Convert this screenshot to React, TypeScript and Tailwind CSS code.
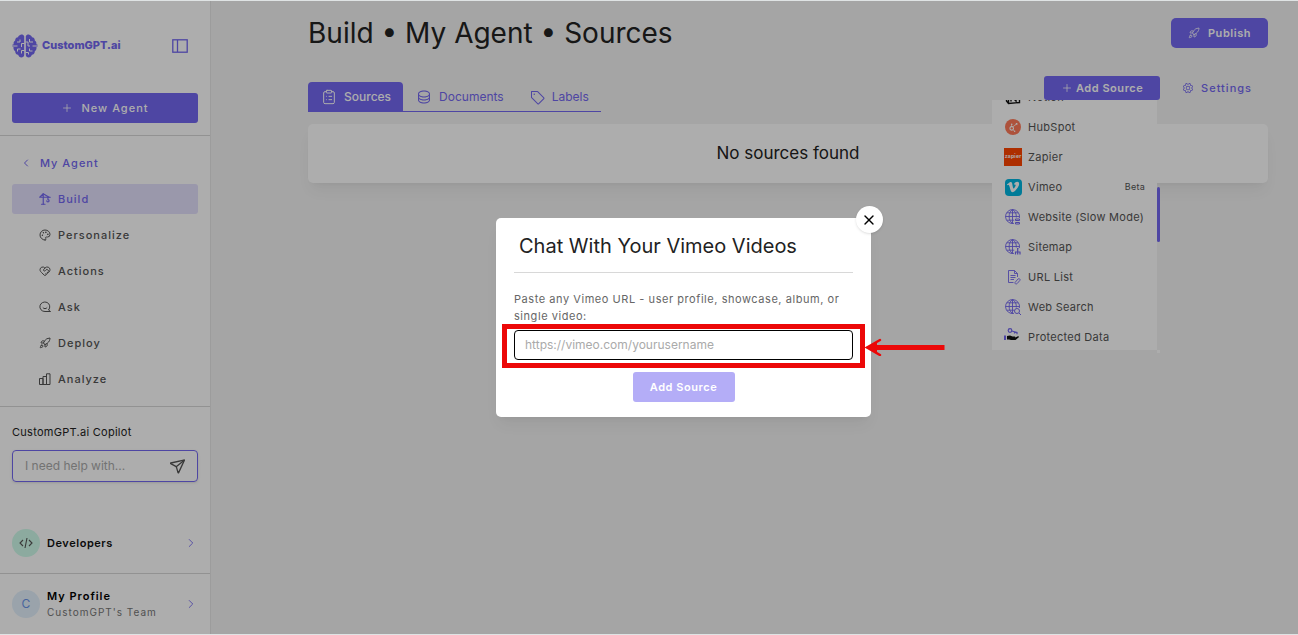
import type { ReactNode } from "react";
import {
  ChevronLeft,
  ChevronRight,
  ClipboardList,
  HeartHandshake,
  Palette,
  Plus,
  Rocket,
  Send,
  X,
} from "lucide-react";
import { FaHubspot, FaVimeoV } from "react-icons/fa";
import { PiDatabase, PiGear, PiTag } from "react-icons/pi";
import { TbCrane } from "react-icons/tb";

interface NavItem {
  label: string;
  icon: ReactNode;
  active?: boolean;
}

interface SourceItem {
  label: string;
  icon: ReactNode;
  badge?: string;
}

function BrainLogo() {
  return (
    <svg viewBox="0 0 26 24" className="h-6 w-[26px] shrink-0" aria-hidden="true">
      <g fill="#7367f0">
        <path d="M12.2 2.2C11.6.8 10 .3 8.6.8 7.200 1.200 6.400 2 6.100 3.200 4.100 3.400 3 4.800 3.200 6.600 1.900 7.400 1.300 8.800 1.700 10.200L.3 10.800v2l1.300.5C1.200 15 1.900 16.500 3.200 17.300 3.100 19.200 4.300 20.600 6.100 20.800 6.600 22.400 7.800 23.400 9.400 23.400 10.900 23.400 12.200 22.500 12.200 21z" />
        <path d="M13.800 2.200C14.400.8 16 .3 17.400.8 18.800 1.200 19.600 2 19.900 3.200 21.900 3.400 23 4.800 22.800 6.600 24.100 7.400 24.700 8.800 24.300 10.200L25.700 10.800v2l-1.300.5C24.800 15 24.100 16.500 22.800 17.300 22.900 19.200 21.700 20.600 19.900 20.800 19.400 22.400 18.200 23.400 16.600 23.400 15.100 23.400 13.800 22.500 13.800 21z" />
      </g>
      <g fill="none" stroke="#fff" strokeWidth="1">
        <path d="M0 12h5.500M5 8h3V5.500M12.500 9.500H9.500v3.500M5.500 17.500V15h3M12.500 16.500H9.500v3" />
        <path d="M26 12h-5.500M21 8h-3.500V5M13.500 8H16v4h2M20.500 17h-3v-2.500M13.500 18.500h3v2" />
      </g>
    </svg>
  );
}

function SidebarToggleIcon() {
  return (
    <svg viewBox="0 0 16 14" className="h-[14px] w-4" fill="none" stroke="currentColor" strokeWidth="1.3">
      <rect x=".8" y=".8" width="14.400" height="12.400" />
      <path d="M5.500 1v12" />
    </svg>
  );
}

function AskIcon() {
  return (
    <svg viewBox="0 0 24 24" className="size-3" fill="none" stroke="currentColor" strokeWidth="2" strokeLinecap="round">
      <path d="M19.500 17.500A10 9.500 0 1 0 12 21h10.500M19.500 17.500 22 21" />
      <path d="M8 13.500c1.500 2.600 6.500 2.600 8 0" />
    </svg>
  );
}

function AnalyzeIcon() {
  return (
    <svg viewBox="0 0 12 12" className="size-3" fill="none" stroke="currentColor">
      <path d="M.5 5.500h3.500v6H.5zM4 3.500h3.500v8H4zM7.500.8H11v10.700H7.500z" />
    </svg>
  );
}

function CodeIcon() {
  return (
    <svg viewBox="0 0 14 12" className="h-3 w-[14px]" fill="none" stroke="#555" strokeWidth="1.1">
      <path d="M4 3 1 6l3 3M10 3l3 3-3 3M8 1 6 11" />
    </svg>
  );
}

function GlobeIcon({ children }: { children: ReactNode }) {
  return (
    <svg viewBox="0 0 18 18" className="size-[18px]" fill="none" stroke="#7367f0" strokeWidth="1">
      <path d="M10 15.400A7 7 0 1 1 15.400 10M8.500 1.500v14M1.500 8.500h14M2.800 4.800h11.400M2.800 12.200h7.400" strokeWidth=".9" />
      <path d="M8.500 15.400C4 12.500 4 4.500 8.500 1.500 11.600 3.500 12.500 6 12.300 9.500" strokeWidth=".9" />
      {children}
    </svg>
  );
}

function FileLinkIcon() {
  return (
    <svg viewBox="0 0 18 18" className="size-[18px]" fill="none" stroke="#7367f0" strokeWidth=".9">
      <path d="M9.500 14.500h-5v-12h6l3 3V9M10.500 2.500v3h3M6.500 7.500h5M6.500 9.500h5M6.500 11.500h3.500" />
      <path d="m11 14.500 3-3.500c1-1 2.800.2 1.800 1.500l-2.600 3c-1 1-2.800.2-2.200-1z" />
    </svg>
  );
}

function ProtectedIcon() {
  return (
    <svg viewBox="0 0 18 18" className="size-[18px]" fill="none">
      <g stroke="#7367f0" strokeWidth="1.200">
        <circle cx="6" cy="2.500" r="1.800" />
        <path d="m7.700 3 5.300 1.500v1.700M10.500 4v1.500" />
      </g>
      <path d="M0 7.500h2V12H0z" fill="#7367f0" />
      <path d="M3 8 6 7.500 8.500 8.500h2.200c.8 0 .8 1 0 1.200L14 8.200c1-.2 1.200.6.6 1.200L11.500 12H7l-2-.5H3z" fill="#111" />
    </svg>
  );
}

function NotionIcon() {
  return (
    <svg viewBox="0 0 18 18" className="size-[18px]" fill="none" stroke="#111" strokeWidth="1.400">
      <path d="M2.500 3.500 12.500 2.500l3 2v10l-11 1-2-2.500zM4.500 6l11-1M4.500 6v9.500M7 13.500V8l5 5V7.500" />
    </svg>
  );
}

const navItems: NavItem[] = [
  { label: "Build", icon: <TbCrane className="size-[14px] shrink-0" />, active: true },
  { label: "Personalize", icon: <Palette className="size-3" /> },
  { label: "Actions", icon: <HeartHandshake className="size-3" /> },
  { label: "Ask", icon: <AskIcon /> },
  { label: "Deploy", icon: <Rocket className="size-3" /> },
  { label: "Analyze", icon: <AnalyzeIcon /> },
];

const sources: SourceItem[] = [
  { label: "Notion", icon: <NotionIcon /> },
  {
    label: "HubSpot",
    icon: (
      <span className="flex size-4 items-center justify-center rounded-full bg-[#ff7a59] text-white">
        <FaHubspot className="size-[9px] -scale-x-100" />
      </span>
    ),
  },
  {
    label: "Zapier",
    icon: (
      <span className="flex size-[18px] items-center justify-center bg-[#ff4400] text-[5px] font-bold text-white">
        zapier
      </span>
    ),
  },
  {
    label: "Vimeo",
    icon: (
      <span className="flex size-[17px] items-center justify-center rounded bg-[#00b5e0] text-white">
        <FaVimeoV className="size-[14px]" />
      </span>
    ),
    badge: "Beta",
  },
  {
    label: "Website (Slow Mode)",
    icon: (
      <GlobeIcon>
        <path d="M11.500 11h4v1.500h-4zM11.500 14.500h4V16h-4z" />
      </GlobeIcon>
    ),
  },
  {
    label: "Sitemap",
    icon: (
      <GlobeIcon>
        <path d="M13 10.500h1.500M13.700 11v3M11 14h5.500M11.500 14v2.500M13.700 14v2.500M16 14v2.500" strokeWidth="1.200" />
      </GlobeIcon>
    ),
  },
  { label: "URL List", icon: <FileLinkIcon /> },
  {
    label: "Web Search",
    icon: (
      <GlobeIcon>
        <circle cx="13" cy="13" r="2.500" />
        <path d="m15 15 2 2" />
      </GlobeIcon>
    ),
  },
  { label: "Protected Data", icon: <ProtectedIcon /> },
];

function Sidebar() {
  return (
    <aside className="flex w-[211px] shrink-0 flex-col border-r border-[#e6e6e6] bg-white">
      <div className="flex h-[92px] items-center justify-between pb-[3px] pr-[22px] pl-3">
        <a href="#" className="flex items-center gap-1 text-[11px] font-extrabold text-[#7367f0]">
          <BrainLogo />
          CustomGPT.ai
        </a>
        <button type="button" aria-label="Toggle sidebar" className="text-[#7367f0]">
          <SidebarToggleIcon />
        </button>
      </div>

      <div className="border-b border-[#d8d8d8] px-3 pb-3">
        <button
          type="button"
          className="flex h-[30px] w-full items-center justify-center gap-2 rounded-[3px] bg-[#7367f0] text-[11px] font-medium tracking-[1px] text-white"
        >
          <Plus className="size-3" strokeWidth={1.5} />
          New Agent
        </button>
      </div>

      <nav className="flex flex-col gap-1.5 border-b border-[#d8d8d8] px-3 py-3 text-[11px] font-medium tracking-[1px]">
        <a href="#" className="flex h-[30px] items-center gap-2 pl-2 text-[#7367f0]">
          <ChevronLeft className="size-3" />
          My Agent
        </a>
        {navItems.map((item) => (
          <a
            key={item.label}
            href="#"
            className={`flex h-[30px] items-center gap-[7px] rounded-[3px] pl-[27px] ${
              item.active ? "bg-[#e4e0fd] text-[#7367f0]" : "text-[#555]"
            }`}
          >
            <span className="flex w-3 justify-center">{item.icon}</span>
            {item.label}
          </a>
        ))}
      </nav>

      <div className="px-3 pt-[17px]">
        <label htmlFor="copilot" className="block text-[11px] leading-4 tracking-wide text-[#222]">
          CustomGPT.ai Copilot
        </label>
        <div className="mt-[10px] flex h-8 items-center rounded border border-[#7367f0] px-3 shadow">
          <input
            id="copilot"
            type="text"
            placeholder="I need help with..."
            className="w-full min-w-0 bg-transparent text-[12px] outline-none placeholder:text-[#aaa]"
          />
          <button type="button" aria-label="Send" className="text-[#555]">
            <Send className="size-4 rotate-6" strokeWidth={2} />
          </button>
        </div>
      </div>

      <a href="#" className="mt-auto flex items-center gap-[7px] border-b border-[#d8d8d8] px-3 py-4">
        <span className="flex size-7 items-center justify-center rounded-full bg-[#cefbea]">
          <CodeIcon />
        </span>
        <span className="text-[11px] font-semibold tracking-wider text-[#111]">Developers</span>
        <ChevronRight className="ml-auto size-[14px] text-[#7367f0]" strokeWidth={1.5} />
      </a>
      <a href="#" className="flex h-[60px] items-center gap-[7px] px-3">
        <span className="flex size-7 items-center justify-center rounded-full bg-[#e3f1fd] text-[12px] text-[#6a94e8]">
          C
        </span>
        <span className="flex flex-col">
          <span className="text-[11px] leading-4 font-semibold tracking-[1px] text-black">My Profile</span>
          <span className="text-[10px] leading-4 tracking-[1px] text-[#777]">CustomGPT's Team</span>
        </span>
        <ChevronRight className="ml-auto size-[14px] text-[#7367f0]" strokeWidth={1.5} />
      </a>
    </aside>
  );
}

function SourceMenu() {
  return (
    <div className="absolute top-full right-0 flex w-[168px] items-start">
      <div className="h-[250px] min-w-0 flex-1 overflow-hidden bg-white">
        <ul className="-mt-[18px]">
          {sources.map((source) => (
            <li key={source.label}>
              <button
                type="button"
                className="flex h-[30px] w-full items-center gap-[6px] px-3 text-left text-[11px] tracking-wide whitespace-nowrap text-[#555]"
              >
                <span className="flex size-[18px] shrink-0 items-center justify-center">{source.icon}</span>
                {source.label}
                {source.badge ? <span className="ml-auto text-[9px]">{source.badge}</span> : null}
              </button>
            </li>
          ))}
        </ul>
      </div>
      <div className="flex h-[253px] w-[3px] flex-col justify-between pt-[87px]">
        <div className="h-[55px] rounded-sm bg-[#7367f0]" />
        <div className="h-[3px] bg-white" />
      </div>
    </div>
  );
}

function VimeoDialog() {
  return (
    <div className="absolute inset-0 flex items-center justify-center pl-[69px]">
      <div
        role="dialog"
        aria-labelledby="dialog-title"
        className="relative w-[375px] rounded-[5px] bg-white px-[18px] pt-3 pb-[15px] shadow-lg shadow-black/5"
      >
        <button
          type="button"
          aria-label="Close"
          className="absolute -top-3 -right-3 flex size-[27px] items-center justify-center rounded-full bg-white pr-px text-black shadow-sm"
        >
          <X className="size-4" strokeWidth={2} />
        </button>
        <h2 id="dialog-title" className="border-b border-[#d8d8d8] px-[5px] pb-[10px] text-[20px] leading-8 text-[#222]">
          Chat With Your Vimeo Videos
        </h2>
        <label htmlFor="vimeo-url" className="mt-[18px] block text-[11px] leading-[17px] tracking-wider text-[#666]">
          Paste any Vimeo URL - user profile, showcase, album, or single video:
        </label>
        <div className="relative mt-[5px]">
          <input
            id="vimeo-url"
            type="text"
            placeholder="https://vimeo.com/yourusername"
            className="block h-[30px] w-full rounded border border-black px-[10px] pb-0.5 text-[12px] outline-none placeholder:text-[#aaa]"
          />
          {/* callout around the field */}
          <div className="pointer-events-none absolute -inset-x-3 -top-1.5 -bottom-2 border-[5px] border-[#ec0808]" />
          <svg
            viewBox="0 0 80 18"
            className="absolute top-2 left-full ml-3 h-[18px] w-20"
            fill="none"
            stroke="#ec0808"
            aria-hidden="true"
          >
            <path d="M4 9.500h75.500" strokeWidth="5" />
            <path d="M15 2 2 9.500 15 17" strokeWidth="2.500" strokeLinecap="round" />
            <path d="M0 9.500 12 4.500v10z" fill="#ec0808" stroke="none" />
          </svg>
        </div>
        <button
          type="button"
          className="mx-auto mt-3 block h-[30px] w-[102px] rounded-[3px] bg-[#b4adf7] text-[11px] font-semibold tracking-wider text-white"
        >
          Add Source
        </button>
      </div>
    </div>
  );
}

export default function App() {
  return (
    <div className="relative flex min-h-screen flex-col border-y border-[#dfe3e4] bg-[#f3f3f3] font-['Inter',sans-serif]">
      <div className="flex flex-1">
        <Sidebar />
        <main className="min-w-0 flex-1 pt-[17px] pr-[30px] pl-[97px]">
          <header className="flex h-[30px] items-center justify-between">
            <h1 className="text-[28px] leading-[30px] text-[#222]">Build • My Agent • Sources</h1>
            <button
              type="button"
              className="flex h-[30px] w-[97px] items-center justify-center gap-2 rounded-[5px] bg-[#7367f0] text-[11px] font-semibold tracking-wider text-white"
            >
              <Rocket className="size-3" strokeWidth={1.5} />
              Publish
            </button>
          </header>

          <div className="mt-7 flex h-9 justify-between">
            <div role="tablist" className="flex self-end border-b border-[#7367f0] text-[12px] text-[#7367f0]">
              <button
                type="button"
                role="tab"
                aria-selected="true"
                className="flex h-[29px] items-center gap-[7px] rounded-t bg-[#7367f0] pr-3 pl-[13px] font-medium text-white"
              >
                <ClipboardList className="size-4" strokeWidth={1.5} />
                Sources
              </button>
              <button type="button" role="tab" aria-selected="false" className="flex h-[29px] items-center gap-[7px] px-[13px]">
                <PiDatabase className="size-4" />
                Documents
              </button>
              <button type="button" role="tab" aria-selected="false" className="flex h-[29px] items-center gap-[7px] px-3">
                <PiTag className="size-4" />
                Labels
              </button>
            </div>
            <div className="flex h-6 gap-1.5">
              <div className="relative">
                <button
                  type="button"
                  className="flex h-6 w-[116px] items-center justify-center gap-[3px] rounded-[3px] bg-[#7367f0] text-[11px] font-semibold tracking-wider text-white"
                >
                  <Plus className="size-3" strokeWidth={1.5} />
                  Add Source
                </button>
                <SourceMenu />
              </div>
              <button
                type="button"
                className="flex h-6 items-center gap-[7px] px-4 text-[11px] font-medium tracking-[1px] text-[#7367f0]"
              >
                <PiGear className="size-3" />
                Settings
              </button>
            </div>
          </div>

          <section className="mt-3 rounded-[5px] bg-white py-4 text-center text-[17px] leading-[27px] text-[#222] shadow-lg shadow-black/5">
            No sources found
          </section>
        </main>
      </div>

      <div className="absolute inset-0 bg-black/32" />
      <VimeoDialog />
    </div>
  );
}
